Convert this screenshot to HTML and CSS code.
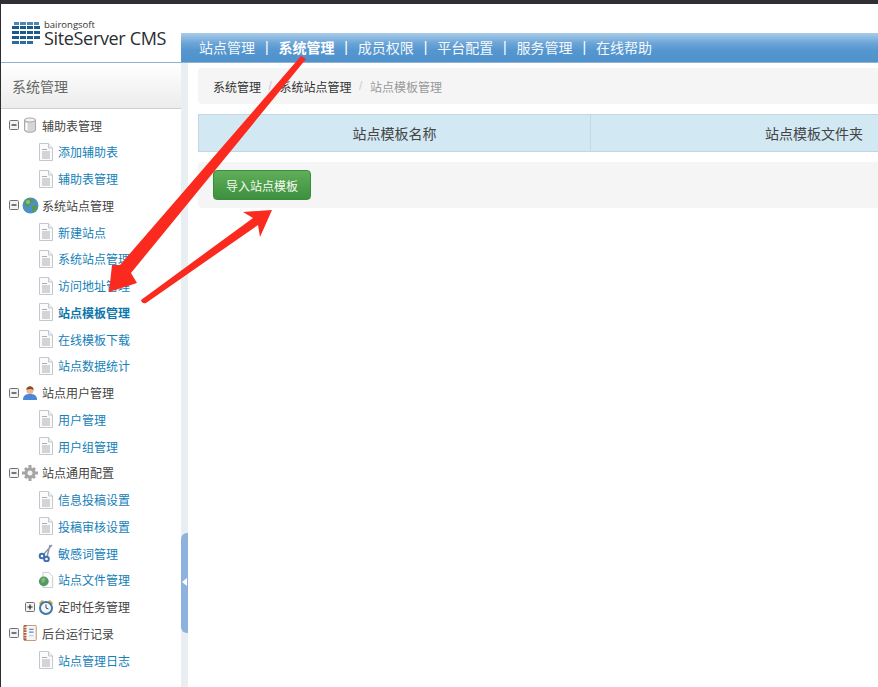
FILE: index.html
```html
<!DOCTYPE html>
<html lang="zh-CN">
<head>
<meta charset="utf-8">
<title>SiteServer CMS</title>
<link rel="stylesheet" href="styles.css">
</head>
<body>
<svg class="defs" width="0" height="0" aria-hidden="true">
  <symbol id="doc" viewBox="0 0 16 18">
    <path d="M1.500.5h9l4 4.500v12.500h-13z" fill="#fbfbfb" stroke="#c4c8cc"/>
    <path d="M10.500.5v4.500h4" fill="#eef0f2" stroke="#c4c8cc"/>
    <path d="M4 6.500h5M4 9h8M4 11h8M4 13h8M4 15h8" stroke="#a9adb2"/>
  </symbol>
  <symbol id="minus" viewBox="0 0 10 10">
    <rect x=".5" y=".5" width="9" height="9" rx="1" fill="#f2f2f2" stroke="#6d7278"/>
    <path d="M2.500 5h5" stroke="#222" stroke-width="1.200"/>
  </symbol>
  <symbol id="plus" viewBox="0 0 10 10">
    <rect x=".5" y=".5" width="9" height="9" rx="1" fill="#f2f2f2" stroke="#6d7278"/>
    <path d="M2.500 5h5M5 2.500v5" stroke="#222" stroke-width="1.200"/>
  </symbol>
  <symbol id="db" viewBox="0 0 16 16">
    <path d="M2.500 3v10c0 3 11 3 11 0V3z" fill="#d6d6d6" stroke="#a8a8a8"/>
    <ellipse cx="8" cy="3" rx="5.500" ry="2" fill="#f2f2f2" stroke="#a8a8a8"/>
    <path d="M4.500 6v7" stroke="#fff" stroke-width="2"/>
  </symbol>
  <symbol id="globe" viewBox="0 0 17 17">
    <circle cx="8.500" cy="8.500" r="8" fill="#4d8fc9"/>
    <path d="M3 4c2-2 5-3 7-2l1 3-3 2-1 3-3-1-2-3zM10 9l4-1 1 2-2 4-2 1-1-3zM11 2l3 2-1 1z" fill="#5c9a3c"/>
    <circle cx="6" cy="5" r="2" fill="#a8cfe8" opacity=".6"/>
  </symbol>
  <symbol id="user" viewBox="0 0 16 16">
    <path d="M1 15c0-5 3-6 7-6s7 1 7 6z" fill="#4a87d6"/>
    <circle cx="8" cy="5.500" r="3.500" fill="#eeb48c"/>
    <path d="M4.300 5c0-5 7.400-5 7.400 0-2-1.500-5-1.500-7.400 0z" fill="#8a4a26"/>
  </symbol>
  <symbol id="gear" viewBox="0 0 16 16">
    <g fill="#a4a4a4">
      <circle cx="8" cy="8" r="5.500"/>
      <path d="M6.500 0h3v16h-3zM0 6.500h16v3H0z"/>
      <path d="M2 4l2-2 10 10-2 2zM12 2l2 2L4 14l-2-2z"/>
    </g>
    <circle cx="8" cy="8" r="2.500" fill="#f4f4f4"/>
  </symbol>
  <symbol id="scissors" viewBox="0 0 16 18">
    <path d="M14 1 5 11M12 1 9 13" stroke="#8d98a6" stroke-width="1.500" fill="none"/>
    <circle cx="4" cy="12" r="2.300" fill="none" stroke="#3f6fb0" stroke-width="2"/>
    <circle cx="8.500" cy="15" r="2.300" fill="none" stroke="#3f6fb0" stroke-width="2"/>
  </symbol>
  <symbol id="filepage" viewBox="0 0 18 18">
    <path d="M5.500.5h7l4 4.500v12.500h-11z" fill="#fbfbfb" stroke="#c4c8cc"/>
    <circle cx="6.500" cy="10.500" r="5.500" fill="#4f9a68"/>
    <path d="M3.500 8c2-2 4-2 5 0l-1 3-3 1z" fill="#8cb86a"/>
  </symbol>
  <symbol id="clock" viewBox="0 0 16 16">
    <path d="M1 4 4 1l2 1-4 4zM15 4l-3-3-2 1 4 4z" fill="#e3a92c"/>
    <circle cx="8" cy="9" r="6" fill="#f4f8fb" stroke="#3d79ad" stroke-width="2"/>
    <path d="M8 5.500V9l2.500 1" fill="none" stroke="#444"/>
  </symbol>
  <symbol id="notebook" viewBox="0 0 16 18">
    <rect x="1" y=".5" width="14" height="17" rx="1" fill="#f6f6f6" stroke="#b9866a"/>
    <path d="M2.500 0v18" stroke="#b2593a" stroke-width="3" stroke-dasharray="2 1"/>
    <path d="M7 5h5M7 8h5" stroke="#5a8fd0" stroke-width="1.500"/>
    <path d="M7 12h5" stroke="#bbb"/>
  </symbol>
</svg>

<div class="topbar"></div>

<header class="header">
  <div class="logo">
    <svg class="logo-mark" viewBox="0 0 28 23" width="28" height="23" aria-hidden="true">
      <g fill="#1d5a8c">
        <path d="M2 1h5v3H2zM8 1h6v3H8zM15 1h6v3h-6zM22 1h5v3h-5z" fill="#4f86b4"/>
        <path d="M0 5h7v3H0zM8 5h6v3H8zM15 5h6v3h-6zM22 5h6v3h-6z"/>
        <path d="M0 10h7v3H0zM8 10h6v3H8zM15 10h6v3h-6zM22 10h6v3h-6z"/>
        <path d="M0 15h7v3H0zM8 15h6v3H8zM15 15h6v3h-6zM22 15h6v3h-6z"/>
        <path d="M0 20h7v3H0zM8 20h6v3H8zM15 20h6v3h-6z" fill="#2f6c9e"/>
      </g>
    </svg>
    <div class="logo-text">
      <span class="logo-small">bairongsoft</span>
      <span class="logo-big">SiteServer CMS</span>
    </div>
  </div>
  <nav class="nav">
    <a class="nav-item">站点管理</a><span class="nav-sep">|</span>
    <a class="nav-item nav-active">系统管理</a><span class="nav-sep">|</span>
    <a class="nav-item">成员权限</a><span class="nav-sep">|</span>
    <a class="nav-item">平台配置</a><span class="nav-sep">|</span>
    <a class="nav-item">服务管理</a><span class="nav-sep">|</span>
    <a class="nav-item">在线帮助</a>
  </nav>
</header>

<div class="body-row">
  <aside class="sidebar">
    <div class="side-title">系统管理</div>
    <ul class="tree">
      <li class="group"><svg class="box"><use href="#minus"/></svg><svg class="ico"><use href="#db"/></svg><span>辅助表管理</span></li>
      <li class="child"><svg class="doc"><use href="#doc"/></svg><a>添加辅助表</a></li>
      <li class="child"><svg class="doc"><use href="#doc"/></svg><a>辅助表管理</a></li>
      <li class="group"><svg class="box"><use href="#minus"/></svg><svg class="ico ico-wide"><use href="#globe"/></svg><span>系统站点管理</span></li>
      <li class="child"><svg class="doc"><use href="#doc"/></svg><a>新建站点</a></li>
      <li class="child"><svg class="doc"><use href="#doc"/></svg><a>系统站点管理</a></li>
      <li class="child"><svg class="doc"><use href="#doc"/></svg><a>访问地址管理</a></li>
      <li class="child"><svg class="doc"><use href="#doc"/></svg><a class="current">站点模板管理</a></li>
      <li class="child"><svg class="doc"><use href="#doc"/></svg><a>在线模板下载</a></li>
      <li class="child"><svg class="doc"><use href="#doc"/></svg><a>站点数据统计</a></li>
      <li class="group"><svg class="box"><use href="#minus"/></svg><svg class="ico"><use href="#user"/></svg><span>站点用户管理</span></li>
      <li class="child"><svg class="doc"><use href="#doc"/></svg><a>用户管理</a></li>
      <li class="child"><svg class="doc"><use href="#doc"/></svg><a>用户组管理</a></li>
      <li class="group"><svg class="box"><use href="#minus"/></svg><svg class="ico"><use href="#gear"/></svg><span>站点通用配置</span></li>
      <li class="child"><svg class="doc"><use href="#doc"/></svg><a>信息投稿设置</a></li>
      <li class="child"><svg class="doc"><use href="#doc"/></svg><a>投稿审核设置</a></li>
      <li class="child"><svg class="doc"><use href="#scissors"/></svg><a>敏感词管理</a></li>
      <li class="child"><svg class="doc"><use href="#filepage"/></svg><a>站点文件管理</a></li>
      <li class="subgroup"><svg class="box"><use href="#plus"/></svg><svg class="ico"><use href="#clock"/></svg><span>定时任务管理</span></li>
      <li class="group"><svg class="box"><use href="#minus"/></svg><svg class="ico"><use href="#notebook"/></svg><span>后台运行记录</span></li>
      <li class="child"><svg class="doc"><use href="#doc"/></svg><a>站点管理日志</a></li>
    </ul>
  </aside>

  <div class="gutter"><div class="toggle"></div></div>

  <main class="main">
    <div class="crumbs">
      <span>系统管理</span><i>/</i><span>系统站点管理</span><i>/</i><span class="crumb-now">站点模板管理</span>
    </div>
    <div class="table-head">
      <div class="cell cell-name">站点模板名称</div>
      <div class="cell cell-folder">站点模板文件夹</div>
    </div>
    <div class="actions">
      <button class="btn" type="button">导入站点模板</button>
    </div>
  </main>
</div>

<svg class="arrows" viewBox="0 0 878 687" width="878" height="687" aria-hidden="true">
  <path d="M301 56 306 59 131 273 137 283 109 292 112 265 120 265Z" fill="#fb2a1f"/>
  <path d="M141 300 253 218 243 212 272 210 260 237 258 225 146 303Q142 304 141 300Z" fill="#fb2a1f"/>
</svg>
</body>
</html>
```
FILE: styles.css
```css
* { box-sizing: border-box; }
html, body { margin: 0; padding: 0; }
body {
  position: relative;
  width: 878px;
  height: 687px;
  overflow: hidden;
  background: #fff;
  border-left: 1px solid #2c2d30;
  font-family: "Liberation Sans", "Noto Sans CJK SC", sans-serif;
  font-size: 12px;
  color: #333;
  display: flex;
  flex-direction: column;
}
.defs { position: absolute; }
.topbar { height: 4px; margin-left: -1px; background: #2f3034; flex: none; }

.header {
  height: 59px;
  flex: none;
  display: flex;
  align-items: flex-end;
  border-bottom: 1px solid #8fb1d2;
}
.logo {
  width: 180px;
  height: 59px;
  flex: none;
  display: flex;
  gap: 4px;
  padding: 18px 0 0 11px;
}
.logo-mark { flex: none; }
.logo-text { display: flex; flex-direction: column; margin-top: -1px; }
.logo-small {
  font-family: "Open Sans", sans-serif;
  font-size: 9.500px;
  line-height: 10px;
  color: #333;
}
.logo-big {
  font-family: "Open Sans", sans-serif;
  font-size: 18px;
  line-height: 16px;
  letter-spacing: -0.340px;
  color: #2a2d30;
  white-space: nowrap;
}
.nav {
  flex: 1;
  height: 29px;
  display: flex;
  align-items: center;
  padding: 0 0 2px 18px;
  background: linear-gradient(#a9cbe8 0, #6ba5d8 35%, #5596cf 60%, #4f92cc 100%);
  color: #fff;
  font-size: 14px;
}
.nav-item { white-space: nowrap; color: #f4f8fc; }
.nav-active { font-weight: 700; color: #fff; }
.nav-sep { width: 23.400px; text-align: center; }

.body-row { flex: 1; min-height: 0; display: flex; }
.sidebar { width: 180px; flex: none; background: #fff; }
.side-title {
  height: 46px;
  padding: 0 0 0 11px;
  display: flex;
  align-items: center;
  font-size: 14px;
  color: #666;
  background: linear-gradient(#fff, #ececec);
  border-bottom: 1px solid #cfcfcf;
}
.tree { list-style: none; margin: 0; padding: 2.800px 0 0; }
.tree li { height: 26.750px; display: flex; align-items: center; white-space: nowrap; }
.tree a { color: #1481b9; }
.tree a.current { font-weight: 700; color: #0f76ab; }
.tree span { color: #444; }
.group { padding-left: 8px; }
.subgroup { padding-left: 24px; }
.child { padding-left: 37px; gap: 4px; }
.box { width: 10px; height: 10px; flex: none; margin-right: 3px; }
.ico { width: 16px; height: 16px; flex: none; margin-right: 4px; overflow: visible; }
.ico-wide { width: 17px; height: 17px; margin-right: 3px; }
.doc { width: 16px; height: 18px; flex: none; }

.gutter { width: 7px; flex: none; background: #e9eef2; position: relative; }
.toggle {
  position: absolute;
  left: 0;
  top: 470px;
  width: 7px;
  height: 100px;
  background: #8db2de;
  border-radius: 6px 0 0 6px;
}
.toggle::after {
  content: "";
  position: absolute;
  left: 1px;
  top: 45px;
  border: 4px solid transparent;
  border-right: 5px solid #fff;
  border-left: 0;
}

.main { flex: 1; min-width: 0; overflow: hidden; padding: 5px 0 0 10px; }
.crumbs {
  height: 36px;
  display: flex;
  align-items: center;
  padding-left: 15px;
  background: #f5f5f5;
  border-radius: 4px 0 0 4px;
  color: #333;
}
.crumbs i { font-style: normal; color: #ccc; width: 18.500px; text-align: center; }
.crumb-now { color: #999; }
.table-head {
  width: 840px;
  height: 38px;
  margin-top: 10px;
  display: flex;
  background: #d2e8f3;
  border: 1px solid #c6d6e0;
  font-size: 14px;
  color: #444;
}
.cell { display: flex; align-items: center; justify-content: center; }
.cell-name { width: 392px; border-right: 1px solid #c6d8e2; }
.cell-folder { flex: 1; }
.actions {
  height: 46px;
  margin-top: 10px;
  padding: 8px 0 0 15px;
  background: #f5f5f5;
  border-radius: 4px 0 0 4px;
}
.btn {
  display: block;
  width: 98px;
  height: 30px;
  padding: 0;
  border: 1px solid #3b8a3e;
  border-radius: 4px;
  background: linear-gradient(#60ae58, #3d903f);
  color: #f4fbf2;
  font: inherit;
}
.arrows { position: absolute; left: -1px; top: 0; pointer-events: none; }
```
